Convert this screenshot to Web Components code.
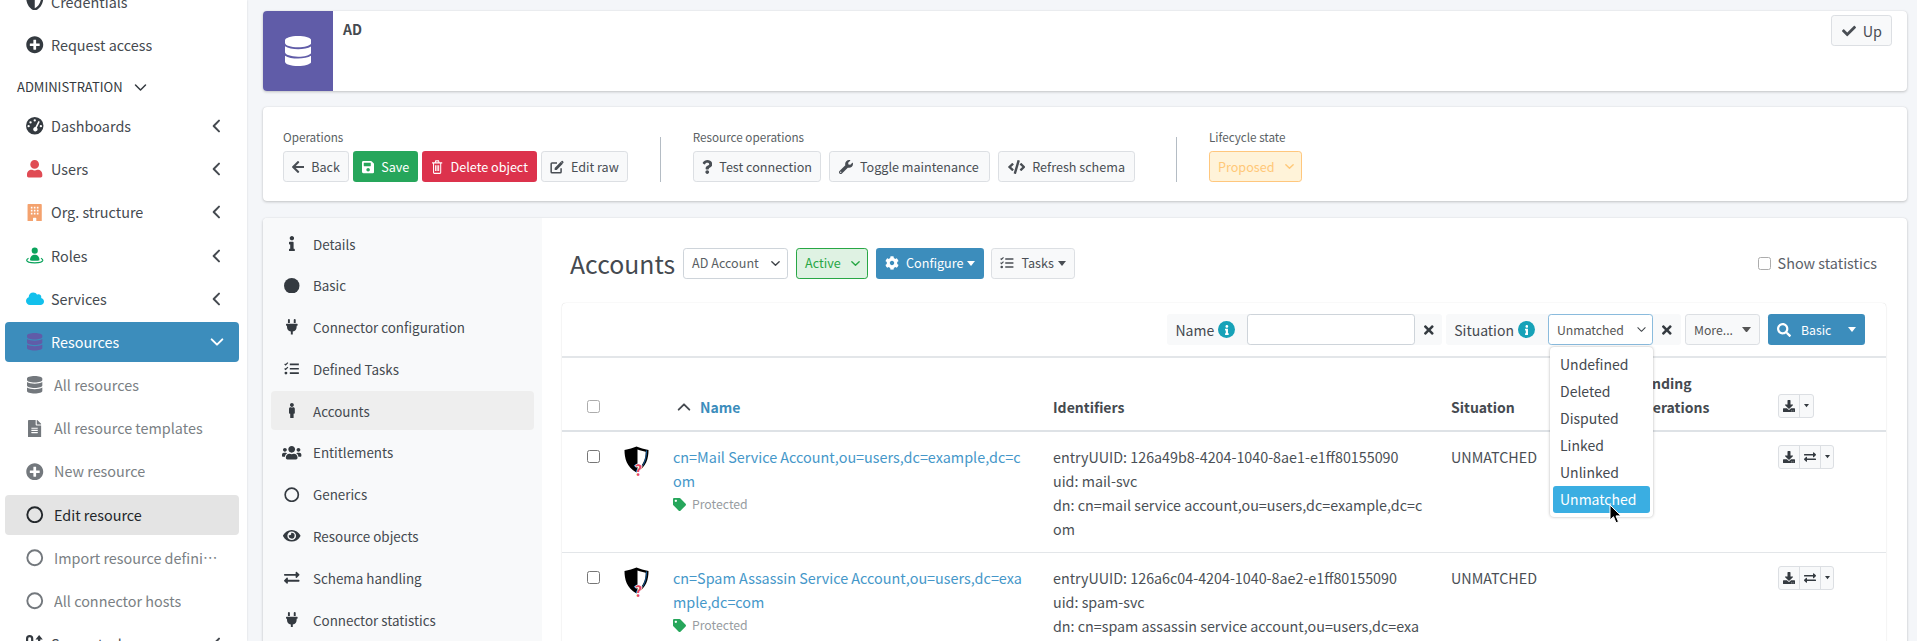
<!DOCTYPE html>
<html lang="en"><head><meta charset="utf-8"><title>AD</title>
<style>
html,body{margin:0;height:641px;overflow:hidden;background:#f4f6f9}
body{font:14px/24px "Noto Sans CJK SC","Noto Sans CJK JP",sans-serif;color:#4a4f55}
</style></head><body>
<x-app>
<x-sidebar slot="side">
  <x-nav icon="shield" style="margin-top:-18.4px">Credentials</x-nav>
  <x-nav icon="plus">Request access</x-nav>
  <x-nav-head>ADMINISTRATION</x-nav-head>
  <x-nav icon="gauge" chev>Dashboards</x-nav>
  <x-nav icon="user" chev tone="#e04b54">Users</x-nav>
  <x-nav icon="building" chev tone="#f4a26e">Org. structure</x-nav>
  <x-nav icon="role" chev tone="#0aa35c">Roles</x-nav>
  <x-nav icon="cloud" chev tone="#12c0ec" big>Services</x-nav>
  <x-nav icon="db" chev open active tone="#605ca8">Resources</x-nav>
  <x-nav sub icon="db">All resources</x-nav>
  <x-nav sub icon="file">All resource templates</x-nav>
  <x-nav sub icon="plus">New resource</x-nav>
  <x-nav sub current icon="ring">Edit resource</x-nav>
  <x-nav sub icon="ring">Import resource definition</x-nav>
  <x-nav sub icon="ring">All connector hosts</x-nav>
  <x-nav icon="sort" chev>Server tasks</x-nav>
</x-sidebar>
<x-main slot="main">
  <x-head-box name="AD"></x-head-box>
  <x-ops-box>
    <x-group label="Operations" gap="4" slot="a">
      <x-btn icon="back">Back</x-btn>
      <x-btn icon="save" kind="success">Save</x-btn>
      <x-btn icon="trash" kind="danger">Delete object</x-btn>
      <x-btn icon="edit">Edit raw</x-btn>
    </x-group>
    <x-group label="Resource operations" gap="8" slot="b">
      <x-btn icon="question" style="padding:0 8px">Test connection</x-btn>
      <x-btn icon="wrench" style="padding:0 10px 0 9px">Toggle maintenance</x-btn>
      <x-btn icon="code" style="padding:0 9px">Refresh schema</x-btn>
    </x-group>
    <x-group label="Lifecycle state" slot="c">
      <x-select kind="warn" w="93">Proposed</x-select>
    </x-group>
  </x-ops-box>
  <x-panel>
    <x-tabs slot="tabs">
      <x-tab icon="info">Details</x-tab>
      <x-tab icon="dot">Basic</x-tab>
      <x-tab icon="plug">Connector configuration</x-tab>
      <x-tab icon="tasks">Defined Tasks</x-tab>
      <x-tab icon="male" active>Accounts</x-tab>
      <x-tab icon="users">Entitlements</x-tab>
      <x-tab icon="ring">Generics</x-tab>
      <x-tab icon="eye">Resource objects</x-tab>
      <x-tab icon="swap">Schema handling</x-tab>
      <x-tab icon="plug">Connector statistics</x-tab>
    </x-tabs>
    <x-title-bar slot="body">
      <x-select w="105">AD Account</x-select>
      <x-select kind="ok" w="72" style="margin-left:8px">Active</x-select>
      <x-btn icon="cog" kind="primary" caret style="margin-left:8px">Configure</x-btn>
      <x-btn icon="tasks" caret style="margin-left:7px">Tasks</x-btn>
    </x-title-bar>
    <x-table-card slot="body">
      <x-filters slot="filters"></x-filters>
      <x-thead slot="rows"></x-thead>
      <x-row slot="rows" name="cn=Mail Service Account,ou=users,dc=example,dc=com" uuid="126a49b8-4204-1040-8ae1-e1ff80155090" uid="mail-svc" dn="cn=mail service account,ou=users,dc=example,dc=com"></x-row>
      <x-row slot="rows" name="cn=Spam Assassin Service Account,ou=users,dc=example,dc=com" uuid="126a6c04-4204-1040-8ae2-e1ff80155090" uid="spam-svc" dn="cn=spam assassin service account,ou=users,dc=example,dc=com"></x-row>
    </x-table-card>
  </x-panel>
</x-main>
</x-app>
<x-dropdown></x-dropdown>
<script>
const P={
 check:[512,'M173.898 439.404l-166.4-166.4c-9.997-9.997-9.997-26.206 0-36.204l36.203-36.204c9.997-9.998 26.207-9.998 36.204 0L192 312.69 432.095 72.596c9.997-9.997 26.207-9.997 36.204 0l36.203 36.204c9.997 9.997 9.997 26.206 0 36.204l-294.4 294.401c-9.998 9.997-26.207 9.997-36.204-.001z'],
 user:[448,'M224 256c70.7 0 128-57.3 128-128S294.7 0 224 0 96 57.3 96 128s57.3 128 128 128zm89.6 32h-16.7c-22.2 10.2-46.9 16-72.9 16s-50.6-5.8-72.9-16h-16.7C60.2 288 0 348.2 0 422.4V464c0 26.5 21.5 48 48 48h352c26.5 0 48-21.5 48-48v-41.6c0-74.2-60.2-134.4-134.4-134.4z'],
 plus:[512,'M256 8C119 8 8 119 8 256s111 248 248 248 248-111 248-248S393 8 256 8zm144 276c0 6.6-5.4 12-12 12h-92v92c0 6.6-5.4 12-12 12h-56c-6.6 0-12-5.4-12-12v-92h-92c-6.6 0-12-5.4-12-12v-56c0-6.6 5.4-12 12-12h92v-92c0-6.6 5.4-12 12-12h56c6.6 0 12 5.4 12 12v92h92c6.6 0 12 5.4 12 12v56z'],
 times:[352,'M242.72 256l100.07-100.07c12.28-12.28 12.28-32.19 0-44.48l-22.24-22.24c-12.28-12.28-32.19-12.28-44.48 0L176 189.28 75.93 89.21c-12.28-12.28-32.19-12.28-44.48 0L9.21 111.45c-12.28 12.28-12.28 32.19 0 44.48L109.28 256 9.21 356.07c-12.28 12.28-12.28 32.19 0 44.48l22.24 22.24c12.28 12.28 32.2 12.28 44.48 0L176 322.72l100.07 100.07c12.28 12.28 32.2 12.28 44.48 0l22.24-22.24c12.28-12.28 12.28-32.19 0-44.48L242.72 256z'],
 db:[448,'M448 73.143v45.714C448 159.143 347.667 192 224 192S0 159.143 0 118.857V73.143C0 32.857 100.333 0 224 0s224 32.857 224 73.143zM448 176v102.857C448 319.143 347.667 352 224 352S0 319.143 0 278.857V176c48.125 33.143 136.208 48.572 224 48.572S399.874 209.143 448 176zm0 160v102.857C448 479.143 347.667 512 224 512S0 479.143 0 438.857V336c48.125 33.143 136.208 48.572 224 48.572S399.874 369.143 448 336z'],
 back:[448,'M257.5 445.1l-22.2 22.2c-9.4 9.4-24.6 9.4-33.9 0L7 273c-9.4-9.4-9.4-24.6 0-33.9L201.4 44.7c9.4-9.4 24.6-9.4 33.9 0l22.2 22.2c9.5 9.5 9.3 25-.4 34.3L136.6 216H424c13.3 0 24 10.7 24 24v32c0 13.3-10.7 24-24 24H136.6l120.5 114.8c9.8 9.3 10 24.8.4 34.3z'],
 search:[512,'M505 442.7L405.3 343c-4.5-4.5-10.6-7-17-7H372c27.6-35.3 44-79.7 44-128C416 93.1 322.9 0 208 0S0 93.1 0 208s93.1 208 208 208c48.3 0 92.7-16.4 128-44v16.3c0 6.4 2.5 12.5 7 17l99.7 99.7c9.4 9.4 24.6 9.4 33.9 0l28.3-28.3c9.4-9.4 9.4-24.6.1-34zM208 336c-70.7 0-128-57.2-128-128 0-70.7 57.2-128 128-128 70.7 0 128 57.2 128 128 0 70.7-57.2 128-128 128z'],
 eye:[576,'M572.52 241.4C518.29 135.59 410.93 64 288 64S57.68 135.64 3.48 241.41a32.35 32.35 0 0 0 0 29.19C57.71 376.41 165.07 448 288 448s230.32-71.64 284.52-177.41a32.35 32.35 0 0 0 0-29.19zM288 400a144 144 0 1 1 144-144 143.93 143.93 0 0 1-144 144zm0-240a95.31 95.31 0 0 0-25.31 3.79 47.85 47.85 0 0 1-66.9 66.9A95.78 95.78 0 1 0 288 160z'],
 swap:[512,'M0 168v-16c0-13.255 10.745-24 24-24h360V80c0-21.367 25.899-32.042 40.971-16.971l80 80c9.372 9.373 9.372 24.569 0 33.941l-80 80C409.956 272.982 384 262.456 384 240v-48H24c-13.255 0-24-10.745-24-24zm488 152H128v-48c0-21.314-25.862-32.08-40.971-16.971l-80 80c-9.372 9.373-9.372 24.569 0 33.941l80 80C102.057 463.997 128 453.437 128 432v-48h360c13.255 0 24-10.745 24-24v-16c0-13.255-10.745-24-24-24z'],
 tag:[512,'M0 252.118V48C0 21.49 21.49 0 48 0h204.118a48 48 0 0 1 33.941 14.059l211.882 211.882c18.745 18.745 18.745 49.137 0 67.882L293.823 497.941c-18.745 18.745-49.137 18.745-67.882 0L14.059 286.059A48 48 0 0 1 0 252.118zM112 64c-26.51 0-48 21.49-48 48s21.49 48 48 48 48-21.49 48-48-21.49-48-48-48z'],
 save:[448,'M433.941 129.941l-83.882-83.882A48 48 0 0 0 316.118 32H48C21.49 32 0 53.49 0 80v352c0 26.51 21.49 48 48 48h352c26.51 0 48-21.49 48-48V163.882a48 48 0 0 0-14.059-33.941zM224 416c-35.346 0-64-28.654-64-64 0-35.346 28.654-64 64-64s64 28.654 64 64c0 35.346-28.654 64-64 64zm96-304.52V212c0 6.627-5.373 12-12 12H76c-6.627 0-12-5.373-12-12V108c0-6.627 5.373-12 12-12h228.52c3.183 0 6.235 1.264 8.485 3.515l3.48 3.48A11.996 11.996 0 0 1 320 111.48z'],
 cog:[512,'M487.4 315.7l-42.6-24.6c4.3-23.2 4.3-47 0-70.2l42.6-24.6c4.9-2.8 7.1-8.6 5.5-14-11.1-35.6-30-67.8-54.7-94.6-3.8-4.1-10-5.1-14.8-2.3L380.8 110c-17.9-15.4-38.5-27.3-60.8-35.1V25.8c0-5.6-3.9-10.5-9.4-11.7-36.7-8.2-74.3-7.8-109.2 0-5.5 1.2-9.4 6.1-9.4 11.7V75c-22.2 7.9-42.8 19.8-60.8 35.1L88.7 85.5c-4.9-2.8-11-1.9-14.8 2.3-24.7 26.7-43.6 58.9-54.7 94.6-1.7 5.4.6 11.2 5.5 14L67.3 221c-4.3 23.2-4.3 47 0 70.2l-42.6 24.6c-4.9 2.8-7.1 8.6-5.5 14 11.1 35.6 30 67.8 54.7 94.6 3.8 4.1 10 5.1 14.8 2.3l42.6-24.6c17.9 15.4 38.5 27.3 60.8 35.1v49.2c0 5.6 3.9 10.5 9.4 11.7 36.7 8.2 74.3 7.8 109.2 0 5.5-1.2 9.4-6.1 9.4-11.7v-49.2c22.2-7.9 42.8-19.8 60.8-35.1l42.6 24.6c4.9 2.8 11 1.9 14.8-2.3 24.7-26.7 43.6-58.9 54.7-94.6 1.5-5.5-.7-11.3-5.6-14.1zM256 336c-44.1 0-80-35.9-80-80s35.9-80 80-80 80 35.9 80 80-35.9 80-80 80z'],
 cloud:[640,'M537.6 226.6c4.1-10.7 6.4-22.4 6.4-34.6 0-53-43-96-96-96-19.7 0-38.1 6-53.3 16.2C367 64.2 315.3 32 256 32c-88.4 0-160 71.6-160 160 0 2.7.1 5.4.2 8.1C40.2 219.8 0 273.2 0 336c0 79.5 64.5 144 144 144h368c70.7 0 128-57.3 128-128 0-61.9-44-113.6-102.4-125.4z'],
 code:[640,'M278.9 511.5l-61-17.7c-6.4-1.8-10-8.5-8.2-14.9L346.2 8.7c1.8-6.4 8.5-10 14.9-8.2l61 17.7c6.4 1.8 10 8.5 8.2 14.9L293.8 503.3c-1.9 6.4-8.5 10.1-14.9 8.2zm-114-112.2l43.5-46.4c4.6-4.9 4.3-12.7-.8-17.2L117 256l90.6-79.7c5.1-4.5 5.5-12.3.8-17.2l-43.5-46.4c-4.5-4.8-12.1-5.1-17-.5L3.8 247.2c-5.1 4.7-5.1 12.8 0 17.5l144.1 135.1c4.9 4.6 12.5 4.4 17-.5zm327.2.6l144.1-135.1c5.1-4.7 5.1-12.8 0-17.5L492.1 112.1c-4.8-4.5-12.4-4.3-17 .5L431.6 159c-4.6 4.9-4.3 12.7.8 17.2L523 256l-90.6 79.7c-5.1 4.5-5.5 12.3-.8 17.2l43.5 46.4c4.5 4.9 12.1 5.1 17 .6z'],
 wrench:[512,'M507.73 109.1c-2.24-9.03-13.54-12.09-20.12-5.51l-74.36 74.36-67.88-11.31-11.31-67.88 74.36-74.36c6.62-6.62 3.43-17.9-5.66-20.16-47.38-11.74-99.55.91-136.58 37.93-39.64 39.64-50.55 97.1-34.05 147.2L18.74 402.76c-24.99 24.99-24.99 65.51 0 90.5 24.99 24.99 65.51 24.99 90.5 0l213.21-213.21c50.12 16.71 107.47 5.68 147.37-34.22 37.07-37.07 49.7-89.32 37.91-136.73zM64 472c-13.25 0-24-10.75-24-24 0-13.26 10.75-24 24-24s24 10.74 24 24c0 13.25-10.75 24-24 24z'],
 question:[384,'M202.021 0C122.202 0 70.503 32.703 29.914 91.026c-7.363 10.58-5.093 25.086 5.178 32.874l43.138 32.709c10.373 7.865 25.132 6.026 33.253-4.148 25.049-31.381 43.63-49.449 82.757-49.449 30.764 0 68.816 19.799 68.816 49.631 0 22.552-18.617 34.134-48.993 51.164-35.423 19.86-82.299 44.576-82.299 106.405V320c0 13.255 10.745 24 24 24h72.471c13.255 0 24-10.745 24-24v-5.773c0-42.86 125.268-44.645 125.268-160.627C377.504 66.256 286.902 0 202.021 0zM192 373.459c-38.196 0-69.271 31.075-69.271 69.271 0 38.195 31.075 69.27 69.271 69.27s69.271-31.075 69.271-69.271-31.075-69.27-69.271-69.27z'],
 info:[192,'M20 424.229h20V279.771H20c-11.046 0-20-8.954-20-20V212c0-11.046 8.954-20 20-20h112c11.046 0 20 8.954 20 20v212.229h20c11.046 0 20 8.954 20 20V492c0 11.046-8.954 20-20 20H20c-11.046 0-20-8.954-20-20v-47.771c0-11.046 8.954-20 20-20zM96 0C56.235 0 24 32.235 24 72s32.235 72 72 72 72-32.235 72-72S135.764 0 96 0z'],
 plug:[384,'M320 32a32 32 0 0 0-64 0v96h64Zm48 128H16A16 16 0 0 0 0 176v32a16 16 0 0 0 16 16H32v32A160.07 160.07 0 0 0 160 412.8V512h64V412.8A160.07 160.07 0 0 0 352 256V224h16a16 16 0 0 0 16-16V176A16 16 0 0 0 368 160ZM128 32a32 32 0 0 0-64 0v96h64Z'],
 download:[512,'M216 0h80c13.3 0 24 10.7 24 24v168h87.7c17.8 0 26.7 21.5 14.1 34.1L269.7 378.3c-7.5 7.5-19.8 7.5-27.3 0L90.1 226.1c-12.6-12.6-3.7-34.1 14.1-34.1H192V24c0-13.3 10.7-24 24-24zm296 376v112c0 13.3-10.7 24-24 24H24c-13.3 0-24-10.7-24-24V376c0-13.3 10.7-24 24-24h146.7l49 49c20.1 20.1 52.5 20.1 72.6 0l49-49H488c13.3 0 24 10.7 24 24zm-124 88c0-11-9-20-20-20s-20 9-20 20 9 20 20 20 20-9 20-20zm64 0c0-11-9-20-20-20s-20 9-20 20 9 20 20 20 20-9 20-20z'],
 users:[640,'M96 224c35.3 0 64-28.7 64-64s-28.7-64-64-64-64 28.7-64 64 28.7 64 64 64zm448 0c35.3 0 64-28.7 64-64s-28.7-64-64-64-64 28.7-64 64 28.7 64 64 64zm32 32h-64c-17.6 0-33.5 7.1-45.1 18.6 40.3 22.1 68.9 62 75.1 109.4h66c17.7 0 32-14.3 32-32v-32c0-35.3-28.7-64-64-64zm-256 0c61.9 0 112-50.1 112-112S381.9 32 320 32 208 82.1 208 144s50.1 112 112 112zm76.8 32h-8.3c-20.8 10-43.9 16-68.5 16s-47.6-6-68.5-16h-8.3C179.6 288 128 339.6 128 403.2V432c0 26.5 21.5 48 48 48h288c26.5 0 48-21.5 48-48v-28.8c0-63.6-51.6-115.2-115.2-115.2zm-223.7-13.4C161.5 263.1 145.6 256 128 256H64c-35.3 0-64 28.7-64 64v32c0 17.7 14.3 32 32 32h65.9c6.3-47.4 34.9-87.3 75.2-109.4z'],
 male:[192,'M96 0c35.346 0 64 28.654 64 64s-28.654 64-64 64-64-28.654-64-64S60.654 0 96 0m48 144h-11.36c-22.711 10.443-49.59 10.894-73.28 0H48c-26.51 0-48 21.49-48 48v136c0 13.255 10.745 24 24 24h16v136c0 13.255 10.745 24 24 24h64c13.255 0 24-10.745 24-24V352h16c13.255 0 24-10.745 24-24V192c0-26.51-21.49-48-48-48z'],
 file:[384,'M224 136V0H24C10.7 0 0 10.7 0 24v464c0 13.3 10.7 24 24 24h336c13.3 0 24-10.7 24-24V160H248c-13.2 0-24-10.8-24-24zm64 236c0 6.6-5.4 12-12 12H108c-6.6 0-12-5.4-12-12v-8c0-6.6 5.4-12 12-12h168c6.6 0 12 5.4 12 12v8zm0-64c0 6.6-5.4 12-12 12H108c-6.6 0-12-5.4-12-12v-8c0-6.6 5.4-12 12-12h168c6.6 0 12 5.4 12 12v8zm0-72v8c0 6.6-5.4 12-12 12H108c-6.6 0-12-5.4-12-12v-8c0-6.6 5.4-12 12-12h168c6.6 0 12 5.4 12 12zM256 0h6.100c6.400 0 12.500 2.500 17 7l97.900 98c4.500 4.500 7 10.600 7 16.900v6.100H256z'],
 building:[448,'M40 0h368a24 24 0 0 1 24 24v464a24 24 0 0 1-24 24H272v-96a16 16 0 0 0-16-16h-64a16 16 0 0 0-16 16v96H40a24 24 0 0 1-24-24V24A24 24 0 0 1 40 0zM112 80v48h48V80zm88 0v48h48V80zm88 0v48h48V80zM112 168v48h48v-48zm88 0v48h48v-48zm88 0v48h48v-48zM112 256v48h48v-48zm88 0v48h48v-48zm88 0v48h48v-48z'],
 shield:[512,'M256 0c10 0 20 2 29 6l192 80c18 7 30 25 30 44 0 200-115 338-222 375-19 8-39 8-58 0C120 466 5 330 5 130c0-19 12-37 30-44L227 6c9-4 19-6 29-6zm0 66v380c90-40 170-150 186-284z']
};
const icon=(n,size,extra='')=>{
 let H=`width="${size}" height="${size}"`;
 if(P[n]){const w=P[n][0];return `<svg part="i" viewBox="0 0 ${w} 512" height="${size}" width="${size*w/512}" fill="currentColor" fill-rule="evenodd" ${extra}><path d="${P[n][1]}"/></svg>`}
 const S={
  ring:`<circle cx="12" cy="12" r="10.2" fill="none" stroke="currentColor" stroke-width="2.6"/>`,
  dot:`<circle cx="12" cy="12" r="12" fill="currentColor"/>`,
  gauge:`<path fill="currentColor" fill-rule="evenodd" d="M12 0a12 12 0 1 0 0 24 12 12 0 0 0 0-24zm0 3a1.6 1.6 0 1 1 0 3.2A1.6 1.6 0 0 1 12 3zM6.2 5.7a1.6 1.6 0 1 1 0 3.2 1.6 1.6 0 0 1 0-3.2zM3.6 11a1.6 1.6 0 1 1 0 3.2 1.6 1.6 0 0 1 0-3.2zm16.8 0a1.6 1.6 0 1 1 0 3.2 1.6 1.6 0 0 1 0-3.2zM17 5.4l1.9 1-4 8.2a3 3 0 1 1-2-.8z"/>`,
  role:`<circle cx="12" cy="5" r="4.2" fill="currentColor"/><path fill="currentColor" d="M5.5 18c0-5 3-7.5 6.5-7.5s6.5 2.5 6.5 7.5c-2 1.3-11 1.3-13 0z"/><path fill="none" stroke="currentColor" stroke-width="1.7" d="M3.5 15.5C1.5 16.5.9 17.6 1 18.4c.3 2 5 3.4 11 3.4s10.700-1.400 11-3.400c.1-.800-.5-1.900-2.500-2.900"/>`,
  tasks:`<path fill="currentColor" d="M9 4h14v2.600H9zM9 10.700h14v2.600H9zM9 17.400h14V20H9z"/><path fill="none" stroke="currentColor" stroke-width="2" d="M1 4.500l1.500 1.500L6 2.500M1 11.500l1.500 1.500L6 9.500"/><circle cx="3" cy="18.700" r="2.200" fill="currentColor"/>`,
  edit:`<path fill="none" stroke="currentColor" stroke-width="2.600" stroke-linejoin="round" d="M19 14v6.500a1.500 1.500 0 0 1-1.500 1.500h-14A1.500 1.500 0 0 1 2 20.500v-14A1.500 1.500 0 0 1 3.500 5H12"/><path fill="currentColor" d="M8 13.500L18.500 3l3.500 3.500L11.500 17H8zM19.800 1.800a1.500 1.500 0 0 1 2.100 0l1 1a1.500 1.500 0 0 1 0 2.100l-.9.900-3.100-3.100z"/>`,
  trash:`<path fill="none" stroke="currentColor" stroke-width="2" d="M5 5v16.500A1.500 1.500 0 0 0 6.500 23h11a1.500 1.500 0 0 0 1.500-1.500V5M2 5h20M8 5l1.200-3.500h5.600L16 5M9 9v10M12 9v10M15 9v10"/>`,
  sort:`<path fill="currentColor" fill-rule="evenodd" d="M5 0a5 5 0 0 0-5 5v4a5 5 0 0 0 10 0V5a5 5 0 0 0-5-5zm0 3a2 2 0 0 1 2 2v4a2 2 0 0 1-4 0V5a2 2 0 0 1 2-2zM18 0l5 6h-3.500v12h-3V6H13z"/>`
 };
 if(n==='trash')H=`width="${size*.875}" height="${size}" preserveAspectRatio="none"`;
 return `<svg part="i" viewBox="0 0 24 24" ${H} ${extra}>${S[n]||''}</svg>`;
};
const chevron=(dir,size,w=2.6)=>{
 const d={left:'M15 4l-8 8 8 8',down:'M4 8l8 8 8-8',up:'M4 16l8-8 8 8'}[dir];
 return `<svg viewBox="0 0 24 24" width="${size}" height="${size}" fill="none" stroke="currentColor" stroke-width="${w}" stroke-linecap="round" stroke-linejoin="round"><path d="${d}"/></svg>`;
};
const caret=(s=8)=>`<svg viewBox="0 0 8 5" width="${s}" height="${s*5/8}" fill="currentColor"><path d="M0 0h8L4 5z"/></svg>`;
function def(tag,css,html,after){
 customElements.define(tag,class extends HTMLElement{
  connectedCallback(){
   if(this.shadowRoot)return;
   const r=this.attachShadow({mode:'open'});
   r.innerHTML=`<style>:host,*{box-sizing:border-box}${css}</style>`+(typeof html==='function'?html(this):html);
   if(after)after(this,r);
  }
 });
}
def('x-app',`:host{display:flex;height:641px;align-items:flex-start}
 ::slotted([slot=side]){flex:0 0 247px}::slotted([slot=main]){flex:0 0 1644px;margin-left:16px}`,
 `<slot name="side"></slot><slot name="main"></slot>`);
def('x-main',`:host{display:block}`,`<slot></slot>`);
def('x-sidebar',`:host{display:flex;flex-direction:column;gap:3.2px;background:#fff;height:641px;overflow:hidden;padding:0 8px 0 5px;box-shadow:0 0 2px rgba(0,0,0,.12);position:relative}`,`<slot></slot>`);
def('x-nav',`:host{display:flex;flex:none;height:40px;align-items:center;border-radius:4px;font-size:14.4px;color:#454a50;position:relative;padding-left:46px;white-space:nowrap}
 :host([active]){background:#3c8dbc;color:#fff}
 :host([sub]){color:#7a7f84;padding-left:49px}
 :host([current]){background:#e4e4e4;color:#22262a}
 .ic{position:absolute;left:21px;width:18px;height:40px;display:flex;align-items:center;justify-content:center;color:#343a40}
 :host([sub]) .ic{color:#73787d}:host([current]) .ic{color:#23272b}
 .t{overflow:hidden;text-overflow:ellipsis;max-width:166px;display:block}
 .c{position:absolute;right:14.500px;display:flex;color:#454a50}:host([active]) .c{color:#fff}`,
 h=>{const t=h.getAttribute('tone');
  return `<span class="ic" style="${t?'color:'+t:''}">${icon(h.getAttribute('icon'),17.500)}</span><span class="t"><slot></slot></span>${h.hasAttribute('chev')?`<span class="c">${h.hasAttribute('open')?chevron('down',16,3):chevron('left',16,3)}</span>`:''}`});
def('x-nav-head',`:host{display:flex;flex:none;align-items:center;gap:10px;height:34.800px;padding:4px 0 0 12px;font-size:13px;color:#343a40}`,`<slot></slot>${chevron('down',15,2.400)}`);
def('x-btn',`:host{display:inline-flex;flex:none;align-items:center;height:31px;padding:0 8px;gap:7px;border:1px solid #dcdfe3;border-radius:3.200px;background:#f8f9fa;font-size:12.6px;color:#494e54;white-space:nowrap}
 :host([kind]){color:#fff;border-color:transparent}
 :host([kind=success]){background:#26a65b}:host([kind=danger]){background:#dc324c}:host([kind=primary]){background:#3c8dbc}
 .c{margin-left:-3px;display:flex}`,
 h=>`${icon(h.getAttribute('icon'),14)}<span><slot></slot></span>${h.hasAttribute('caret')?`<span class="c">${caret()}</span>`:''}`);
def('x-select',`:host{display:inline-flex;flex:none;align-items:center;justify-content:space-between;height:31px;padding:0 6px 0 8px;border:1px solid #ced4da;border-radius:3.200px;background:#fff;font-size:12.6px;color:#5a5f64;white-space:nowrap}
 svg{color:#3f4449}
 :host([kind=ok]){background:#dff2e3;border-color:#28a745;color:#28a745}:host([kind=ok]) svg{color:#28a745}
 :host([kind=warn]){background:#fff3d9;border-color:#ffc77d;color:#ffc878}:host([kind=warn]) svg{color:#ffc878}
 :host([kind=focus]){border-color:#8abbdd;font-size:12.250px;padding:0 5px 0 8px;color:#555}`,
 h=>{h.style.width=h.getAttribute('w')+'px';return `<span><slot></slot></span>${chevron('down',11,h.getAttribute('kind')==='focus'?2.2:3)}`});
def('x-group',`:host{display:flex;flex-direction:column;flex:none}
 .l{font-size:11.700px;line-height:16px;height:22px;color:#5a5f64}
 .r{display:flex}`,
 h=>`<div class="l">${h.getAttribute('label')}</div><div class="r" style="gap:${h.getAttribute('gap')||0}px"><slot></slot></div>`);
def('x-head-box',`:host{display:flex;height:80px;margin-top:11px;background:#fff;border-radius:4px;box-shadow:0 0 1px rgba(0,0,0,.13),0 1px 3px rgba(0,0,0,.2)}
 .i{width:70px;background:#605ca8;border-radius:4px 0 0 4px;color:#fff;display:flex;align-items:center;justify-content:center}
 .n{font-weight:700;font-size:14px;padding:6px 0 0 10px;flex:1;color:#454a50;line-height:24px}
 .b{margin:4px 15px 0 0}`,
 h=>`<div class="i">${icon('db',30)}</div><div class="n">${h.getAttribute('name')}</div><x-btn class="b" icon="check" style="font-size:14.400px;padding:0 9px 0 10px">Up</x-btn>`);
def('x-ops-box',`:host{display:flex;height:94px;margin-top:16px;background:#fff;border-radius:4px;padding:22px 20px 0;box-shadow:0 0 1px rgba(0,0,0,.13),0 1px 3px rgba(0,0,0,.2)}
 .s{width:1px;height:45px;margin-top:8px!important;background:#b4bcc4;flex:none}`,
 `<slot name="a"></slot><div class="s" style="margin:0 32px"></div><slot name="b"></slot><div class="s" style="margin:0 32px 0 41px"></div><slot name="c"></slot>`);
def('x-panel',`:host{display:flex;margin-top:17px;height:460px;background:#fff;border-radius:4px;box-shadow:0 0 1px rgba(0,0,0,.13),0 1px 3px rgba(0,0,0,.2);overflow:hidden}
 .b{flex:1;padding:0 21px 0 20px;position:relative}`,
 `<slot name="tabs"></slot><div class="b"><slot name="body"></slot></div>`);
def('x-tabs',`:host{display:flex;flex-direction:column;flex:0 0 279px;background:#f8f9fa;padding:6px 8px;gap:2.800px}`,`<slot></slot>`);
def('x-tab',`:host{display:flex;flex:none;height:39px;align-items:center;border-radius:4px;padding-left:42px;position:relative;font-size:13.4px;color:#454a50;white-space:nowrap}
 :host([active]){background:#eee}
 .ic{position:absolute;left:10px;width:22px;display:flex;justify-content:center;color:#343a40}`,
 h=>`<span class="ic">${icon(h.getAttribute('icon'),15.500)}</span><slot></slot>`);
def('x-title-bar',`:host{display:flex;align-items:center;height:62px;padding:0 8px 0 8px;margin-top:14px;position:relative}
 h3{margin:0 8px 0 0;font-weight:400;font-size:24.8px;color:#454a50;line-height:32px}
 .s{margin-left:auto;display:flex;align-items:center;gap:7px;font-size:14.4px;color:#5a6068;margin-right:1px}
 input{margin:0;opacity:.6}`,
 `<h3>Accounts</h3><slot></slot><label class="s"><input type="checkbox">Show statistics</label>`);
def('x-table-card',`:host{display:block;margin-top:9px;height:400px;background:#fff;border-radius:4px 4px 0 0;box-shadow:0 0 1px rgba(0,0,0,.2),0 1px 2px rgba(0,0,0,.08)}`,
 `<slot name="filters"></slot><slot name="rows"></slot>`);
def('x-filter',`:host{display:flex;align-items:center;height:31px;background:#f8f9fa;border-radius:3.200px;padding:0 0 0 8px;font-size:14px;color:#454a50}
 .inf{width:17px;height:17px;border-radius:50%;background:#17a2b8;color:#fff;display:flex;align-items:center;justify-content:center;margin-left:4px}
 .x{display:flex;justify-content:center;color:#343a40}`,
 h=>`<span>${h.getAttribute('label')}</span><span class="inf">${icon('info',10)}</span><span style="margin-left:${h.getAttribute('pre')}px;display:flex"><slot></slot></span><span class="x" style="width:${h.getAttribute('xw')}px">${icon('times',14)}</span>`);
def('x-filters',`:host{display:flex;align-items:center;justify-content:flex-end;height:55px;padding-right:21px;gap:4px;border-bottom:2px solid #e3e6e9}
 .inp{display:block;width:168px;height:31px;border:1px solid #ced4da;border-radius:3.200px;background:#fff}
 .m{display:flex;align-items:center;width:75px;height:31px;border:1px solid #dcdfe3;background:#f8f9fa;border-radius:3.200px;padding:0 8px;font-size:12.250px;color:#555;justify-content:space-between}
 .b{display:flex;align-items:center;width:97px;height:31px;margin-left:4px;background:#3c8dbc;border-radius:3.200px;color:#fff;font-size:12.250px;padding:0 9px}`,
 `<x-filter label="Name" pre="12" xw="27"><span class="inp"></span></x-filter>
  <x-filter label="Situation" pre="13" xw="28"><x-select kind="focus" w="105">Unmatched</x-select></x-filter>
  <span class="m"><span>More...</span>${caret(9)}</span>
  <span class="b">${icon('search',14)}<span style="margin-left:10px;flex:1">Basic</span>${caret(8)}</span>`);
const GRID=`display:grid;grid-template-columns:37px 49px 380px 398px 184px 143px auto;padding-left:25px;`;
def('x-thead',`:host{${GRID}height:74px;align-items:end;font-weight:700;font-size:14px;color:#454a50;border-bottom:2px solid #dee2e6;padding-bottom:11px}
 input{margin:0 0 6px;opacity:.6;justify-self:start}
 .n{display:flex;align-items:center;color:#3c8dbc;padding-left:3px;gap:8px}
 .n svg{color:#454a50}.p{line-height:24px}
 .g{display:inline-flex;height:24px;width:36px;border:1px solid #dcdfe3;background:#f8f9fa;border-radius:3px;align-items:center;color:#343a40;margin-bottom:1px}
 .g span{display:flex;align-items:center;justify-content:center;height:100%}
 .g span:first-child{width:21px;border-right:1px solid #dcdfe3}.g span:last-child{flex:1}`,
 `<input type="checkbox"><span></span><span class="n">${chevron('up',16,2.800)}<span>Name</span></span><span>Identifiers</span><span>Situation</span><span class="p">Pending<br>operations</span><span class="g"><span>${icon('download',12)}</span><span>${caret(5)}</span></span>`);
def('x-row',`:host{${GRID}padding-top:13px;padding-bottom:11px;border-bottom:1px solid #e3e6e9;font-size:14.300px;color:#4a4f55;min-height:120px;align-items:start}
 input{margin:5px 0 0;justify-self:start}
 a{color:#4597c9;display:block;width:352px;word-break:break-all;font-size:14.400px}
 .id{width:375px;word-break:break-all}
 .t{display:flex;align-items:center;gap:6px;font-size:12.250px;color:#979ca1;line-height:20px;margin-top:1px}.t svg{color:#26a65b}
 .g{display:inline-flex;height:24px;width:56px;border:1px solid #dcdfe3;background:#f8f9fa;border-radius:3px;align-items:center;color:#343a40}
 .g span{display:flex;align-items:center;justify-content:center;height:100%;width:21px;border-right:1px solid #dcdfe3}.g span:last-child{flex:1;border:0}
 svg.sh{margin-top:1px;display:block;overflow:visible}`,
 h=>{const a=n=>h.getAttribute(n);return `<input type="checkbox"><svg class="sh" viewBox="0 0 25 30" width="25" height="30">
   <path d="M12.500 0.500C16 2 20 3 24.500 4c0 8-2 17-12 22.500C2.500 21 .5 12 .5 4 5 3 9 2 12.500 .5z" fill="#000"/>
   <path d="M13.500 3.500c3 1 5.500 1.700 8.200 2.300 0 6-2 13.500-8.200 17.700z" fill="#fff"/><path d="M22.500 4.500c0 7-2 15-8 20" fill="none" stroke="#1976c8" stroke-width=".8"/>
   <text x="10.500" y="29.500" font-size="15" font-weight="700" fill="#e8475f" stroke="#fff" stroke-width="1.200" paint-order="stroke" font-family="Noto Sans CJK SC,sans-serif">?</text></svg>
   <div><a>${a('name')}</a><div class="t">${icon('tag',13)}<span>Protected</span></div></div>
   <div class="id">entryUUID: ${a('uuid')}<br>uid: ${a('uid')}<br>dn: ${a('dn')}</div>
   <div>UNMATCHED</div><div></div>
   <div class="g"><span>${icon('download',12)}</span><span>${icon('swap',12)}</span><span>${caret(5)}</span></div>`});
def('x-dropdown',`:host{position:absolute;left:1550px;top:347px;width:103px;height:170px;background:#fff;border-radius:4px;box-shadow:0 0 3px rgba(0,0,0,.3);padding:4px 3px;font-size:14px;color:#454a50}
 div{height:27px;line-height:27px;padding-left:7px;border-radius:3px}
 .on{background:#3aaee2;color:#fff}
 svg{position:absolute;left:59px;top:157px}`,
 `<div>Undefined</div><div>Deleted</div><div>Disputed</div><div>Linked</div><div>Unlinked</div><div class="on">Unmatched</div>
  <svg width="13" height="20" viewBox="0 0 13 20"><path d="M1 1v15l3.500-3.300 2.500 6 2.500-1-2.500-5.800H12z" fill="#000" stroke="#fff" stroke-width="1"/></svg>`);
</script>
</body></html>
